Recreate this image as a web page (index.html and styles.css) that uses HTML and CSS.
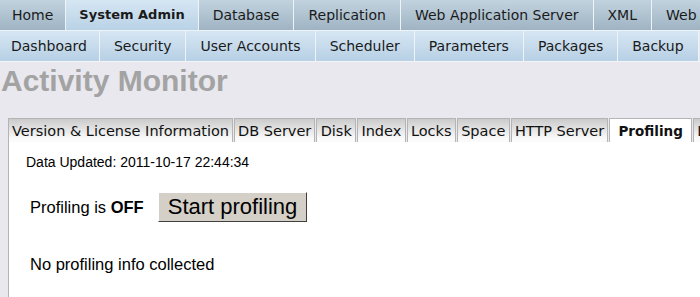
FILE: index.html
```html
<!DOCTYPE html>
<html lang="en">
<head>
  <meta charset="UTF-8" />
  <title>Activity Monitor</title>
  <link rel="stylesheet" href="styles.css">
</head>
<body>
  <div class="nav main-nav">
    <a class="nav-item">Home</a>
    <a class="nav-item active">System Admin</a>
    <a class="nav-item">Database</a>
    <a class="nav-item">Replication</a>
    <a class="nav-item">Web Application Server</a>
    <a class="nav-item">XML</a>
    <a class="nav-item">Web</a>
  </div>
  <div class="nav sub-nav">
    <a class="nav-item">Dashboard</a>
    <a class="nav-item">Security</a>
    <a class="nav-item">User Accounts</a>
    <a class="nav-item">Scheduler</a>
    <a class="nav-item">Parameters</a>
    <a class="nav-item">Packages</a>
    <a class="nav-item">Backup</a>
  </div>

  <h1 class="page-title">Activity Monitor</h1>

  <div class="tabs">
    <div class="tab">Version &amp; License Information</div>
    <div class="tab">DB Server</div>
    <div class="tab">Disk</div>
    <div class="tab">Index</div>
    <div class="tab">Locks</div>
    <div class="tab">Space</div>
    <div class="tab">HTTP Server</div>
    <div class="tab selected">Profiling</div>
    <div class="tab">L</div>
  </div>

  <div class="panel">
    <div class="updated">Data Updated: 2011-10-17 22:44:34</div>
    <div class="status-row">
      <span>Profiling is <b>OFF</b></span>
      <button class="btn">Start profiling</button>
    </div>
    <div class="note">No profiling info collected</div>
  </div>
</body>
</html>
```

FILE: styles.css
```css
* { box-sizing: border-box; }
html, body { overflow: hidden; }
body {
  margin: 0;
  background: #e8e8ee;
  font-family: "Liberation Sans", Arial, sans-serif;
  color: #000;
}
.nav {
  display: flex;
  white-space: nowrap;
  font-family: "DejaVu Sans", Verdana, sans-serif;
  font-size: 14px;
}
.nav-item {
  flex: none;
  padding: 0 14px;
  border-right: 1px solid #eef3f7;
  color: #1a1a1a;
}
.main-nav .nav-item {
  height: 30px;
  line-height: 30px;
  background: linear-gradient(#c2d3df, #9fb3c3);
}
.main-nav .nav-item:first-child { padding: 0 12px; }
.main-nav .nav-item.active {
  font-weight: bold;
  font-size: 13px;
  padding: 0 13px;
  background: linear-gradient(#d6e6f3, #b9d2e6);
}
.sub-nav {
  border-top: 1px solid #eef3f7;
  border-bottom: 1px solid #f4f4f8;
}
.sub-nav .nav-item {
  height: 30px;
  line-height: 30px;
  background: linear-gradient(#d6e6f3, #b7d0e5);
}
.sub-nav .nav-item:first-child { padding: 0 12px 0 11px; }
.page-title {
  margin: 1px 0 0 1px;
  font-size: 30px;
  font-weight: bold;
  color: #a3a3a3;
  line-height: 36px;
}
.tabs {
  display: flex;
  margin: 19px 0 0 8px;
  white-space: nowrap;
  font-family: "DejaVu Sans", Verdana, sans-serif;
  font-size: 14.5px;
}
.tab {
  flex: none;
  height: 24px;
  line-height: 24px;
  padding: 0 3px;
  margin-right: 1px;
  border: 1px solid #b4b4b4;
  border-bottom: none;
  background: linear-gradient(#cbcbcb, #fafafa 85%);
  color: #111;
}
.tab:nth-child(n+3) { padding: 0 3.3px; }
.tab.selected {
  background: #fff;
  font-weight: bold;
  font-size: 13.5px;
  padding: 0 8px;
}
.panel {
  background: #fff;
  border-left: 1px solid #b4b4b4;
  margin-left: 8px;
  height: 200px;
  padding: 12px 0 0 17px;
  font-size: 14px;
}
.updated {
  line-height: 16px;
  margin-bottom: 22px;
}
.status-row {
  display: flex;
  align-items: center;
  font-size: 16.5px;
  padding-left: 4px;
}
.btn {
  margin-left: 14px;
  font-family: "Liberation Sans", Arial, sans-serif;
  font-size: 22px;
  line-height: 26px;
  padding: 1px 9px;
  background: #d4d0c8;
  border: 1px solid;
  border-color: #fff #404040 #404040 #fff;
  color: #000;
}
.note {
  margin-top: 33px;
  padding-left: 4px;
  font-size: 16.5px;
  line-height: 19px;
}
```
